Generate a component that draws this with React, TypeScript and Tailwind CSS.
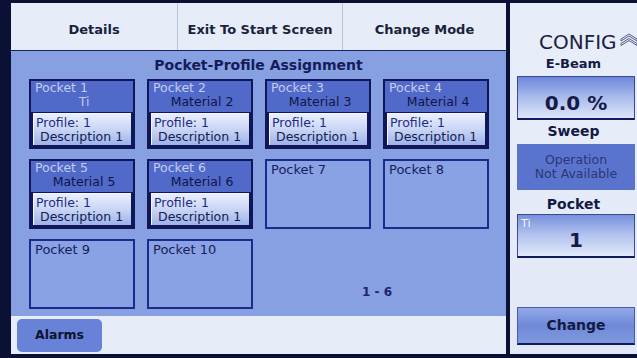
import React from "react";

const font = "font-['DejaVu_Sans',sans-serif]";

function FilledCard({ n, mat }: { n: number; mat: string }) {
  return (
    <div className="h-[70px] border-2 border-[#0f175a] bg-[#0f175a] flex flex-col">
      <div className="h-[31px] bg-[#5169c9] pl-[4px] text-[12.5px] leading-[14px]">
        <div className="text-[#c3ccf0]">Pocket {n}</div>
        <div className={`text-center ${mat === "Ti" ? "text-[#c3ccf0]" : "text-[#0f1646]"}`}>{mat}</div>
      </div>
      <div className="flex-1 mt-[1px] ml-[2px] mr-[2px] mb-[2px] bg-linear-to-b from-[#eaeffc] via-[#c9d5f5] to-[#9db2ea] border-t border-l border-[#f4f7ff] pl-[2px] pt-[2px] text-[12.5px] leading-[14px]">
        <div className="text-[#1c2a88]">Profile: 1</div>
        <div className="pl-[4px] text-[#151c4e]">Description 1</div>
      </div>
    </div>
  );
}

function EmptyCard({ n }: { n: number }) {
  return (
    <div className="h-[70px] border-2 border-[#1b2a8c] bg-[#89a2e4] pl-[4px] pt-[2px] text-[13px] leading-[14px] text-[#17205c]">
      Pocket {n}
    </div>
  );
}

export default function App() {
  return (
    <div className={`w-[637px] h-[358px] bg-[#0b1035] pt-[3px] pl-[11px] pb-[4px] flex ${font}`}>
      {/* Left column */}
      <div className="w-[495px] flex flex-col">
        <div className="h-[48px] bg-[#e6ecf8] border-b border-[#1a2060] flex text-[13px] font-bold text-[#1a1f3c]">
          <div className="w-[167px] flex items-center justify-center pt-[7px] border-r border-[#b9c2d6]">Details</div>
          <div className="w-[165px] flex items-center justify-center pt-[7px] border-r border-[#b9c2d6]">Exit To Start Screen</div>
          <div className="flex-1 flex items-center justify-center pt-[7px]">Change Mode</div>
        </div>
        <div className="flex-1 bg-[#86a0e2] px-[18px] flex flex-col">
          <div className="h-[28px] flex items-center justify-center text-[14px] font-bold text-[#141c5a]">
            Pocket-Profile Assignment
          </div>
          <div className="grid grid-cols-[repeat(4,106px)] gap-x-[12px] gap-y-[10px]">
            <FilledCard n={1} mat="Ti" />
            <FilledCard n={2} mat="Material 2" />
            <FilledCard n={3} mat="Material 3" />
            <FilledCard n={4} mat="Material 4" />
            <FilledCard n={5} mat="Material 5" />
            <FilledCard n={6} mat="Material 6" />
            <EmptyCard n={7} />
            <EmptyCard n={8} />
            <EmptyCard n={9} />
            <EmptyCard n={10} />
            <div className="col-span-2 h-[70px] flex items-end justify-center pb-[8px] text-[12px] font-bold text-[#1a2470]">
              1 - 6
            </div>
          </div>
        </div>
        <div className="h-[38px] bg-[#e6ecf8] pl-[6px] pt-[3px]">
          <div className="w-[85px] h-[33px] rounded-[5px] bg-[#6782d6] flex items-center justify-center text-[12.5px] font-bold text-[#0e1330]">
            Alarms
          </div>
        </div>
      </div>

      {/* Right column */}
      <div className="ml-[4px] w-[127px] bg-linear-to-b from-[#e8eef9] to-[#e2e8f6] flex flex-col">
        <div className="h-[50px] flex items-end pl-[29px] pb-[1px] text-[#1c2040]">
          <span className="text-[20px] leading-[20px]">CONFIG</span>
          <svg width="18" height="13" viewBox="0 0 18 13" className="ml-[3px] mb-[6px] shrink-0">
            <polygon points="1,6 9,1 17,6 17,8 9,3 1,8" fill="none" stroke="#4a4f78" strokeWidth="0.9" />
            <polygon points="1,10.5 9,5.5 17,10.5 17,12.5 9,7.5 1,12.5" fill="none" stroke="#4a4f78" strokeWidth="0.9" />
          </svg>
        </div>
        <div className="h-[22px] flex items-center justify-center text-[13px] font-bold text-[#141a44]">E-Beam</div>
        <div className="mt-[1px] ml-[7px] mr-[2px] h-[44px] bg-linear-to-b from-[#6d88d9] via-[#aabcec] to-[#dde5f9] border border-[#3a4a98] border-b-2 border-b-[#101a5e] flex items-end justify-center pb-[5px] text-[20px] leading-[20px] font-bold text-[#141a48]">
          0.0 %
        </div>
        <div className="h-[22px] flex items-center justify-center text-[14px] font-bold text-[#141a44]">Sweep</div>
        <div className="mt-[2px] ml-[7px] mr-[2px] h-[46px] bg-[#5a74cd] flex flex-col items-center justify-center text-[12.5px] leading-[14px] text-[#2a3676]">
          <div>Operation</div>
          <div>Not Available</div>
        </div>
        <div className="mt-[4px] h-[20px] flex items-center justify-center text-[14px] font-bold text-[#141a44]">Pocket</div>
        <div className="ml-[7px] mr-[2px] h-[44px] bg-linear-to-b from-[#7891dc] via-[#b4c4ef] to-[#e1e8f9] border border-[#3a4a98] border-b-2 border-b-[#101a5e] flex flex-col px-[3px] pt-[3px]">
          <div className="text-[11px] leading-[12px] text-[#f2f5ff]">Ti</div>
          <div className="text-center text-[20px] leading-[20px] font-bold text-[#141a44]">1</div>
        </div>
        <div className="flex-1" />
        <div className="mb-[9px] ml-[7px] mr-[2px] h-[38px] bg-linear-to-b from-[#93a8e6] via-[#6e89d9] to-[#809ade] border border-[#4a5aa8] border-b-2 border-b-[#101a5e] flex items-center justify-center text-[14px] font-bold text-[#141a44]">
          Change
        </div>
      </div>
    </div>
  );
}
